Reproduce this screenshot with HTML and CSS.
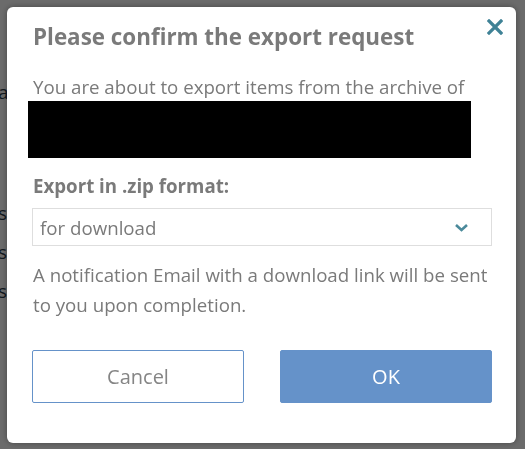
FILE: index.html
```html
<!DOCTYPE html>
<html lang="en">
<head>
  <meta charset="UTF-8">
  <title>Export request</title>
  <link rel="stylesheet" href="styles.css">
</head>
<body>

  <div class="page">
    <p class="line first">a</p>
    <p class="line">s</p>
    <p class="line">s</p>
    <p class="line">s</p>
  </div>

  <div class="overlay">
    <div class="modal">
      <button class="close" aria-label="Close">
        <svg width="16" height="16" viewBox="0 0 16 16">
          <path d="M2 2 L14 14 M14 2 L2 14" stroke="#3f8296" stroke-width="3.2" stroke-linecap="square" fill="none"/>
        </svg>
      </button>
      <h2>Please confirm the export request</h2>
      <p class="intro">You are about to export items from the archive of</p>
      <div class="redacted"></div>
      <label class="field-label">Export in .zip format:</label>
      <div class="select">
        <span>for download</span>
        <svg width="15" height="9" viewBox="0 0 15 9">
          <path d="M2 2 L7.5 7 L13 2" stroke="#4b8a9b" stroke-width="2.6" fill="none"/>
        </svg>
      </div>
      <p class="note">A notification Email with a download link will be sent to you upon completion.</p>
      <div class="actions">
        <button class="btn cancel">Cancel</button>
        <button class="btn ok">OK</button>
      </div>
    </div>
  </div>

</body>
</html>
```

FILE: styles.css
```css
* {
  box-sizing: border-box;
}
body {
  margin: 0;
  font-family: 'Open Sans', sans-serif;
  background: #fff;
  color: #2b3a4a;
  height: 449px;
  overflow: hidden;
}
.page {
  padding-top: 80px;
  margin-left: -2px;
}
.line {
  margin: 0 0 15px;
  font-size: 19px;
  line-height: 24px;
}
.line.first {
  margin-bottom: 97px;
}
.overlay {
  position: fixed;
  inset: 0;
  background: rgba(0, 0, 0, 0.58);
  padding: 7px 9px 6px 7px;
}
.modal {
  position: relative;
  background: #fff;
  border-radius: 6px;
  height: 436px;
  padding: 15px 26px 0 26px;
  box-shadow: 0 0 6px rgba(0, 0, 0, 0.35);
  color: #7a7a7a;
}
.close {
  position: absolute;
  top: 12px;
  right: 13px;
  background: none;
  border: none;
  padding: 0;
  cursor: pointer;
}
h2 {
  margin: 0;
  font-size: 22.4px;
  font-weight: 700;
  line-height: 30px;
}
.intro {
  margin: 23px 0 0;
  font-size: 18.7px;
  line-height: 24px;
}
.redacted {
  background: #000;
  height: 57px;
  width: 443px;
  margin: 2px 0 0 -5px;
}
.field-label {
  display: block;
  margin-top: 16px;
  font-size: 18.7px;
  font-weight: 700;
  line-height: 24px;
}
.select {
  display: flex;
  align-items: center;
  justify-content: space-between;
  margin: 10px 0 0 -1px;
  width: 460px;
  height: 38px;
  border: 1px solid #dedede;
  padding: 0 22px 0 7px;
  font-size: 18.7px;
}
.note {
  margin: 14px 0 0;
  font-size: 18.7px;
  line-height: 30px;
}
.actions {
  display: flex;
  gap: 36px;
  margin: 30px 0 0 -1px;
  width: 460px;
}
.btn {
  flex: 1;
  height: 53px;
  border-radius: 2px;
  border: 1px solid #6592c9;
  font-family: 'Open Sans', sans-serif;
  font-size: 20px;
  cursor: pointer;
}
.cancel {
  background: #fff;
  color: #858585;
}
.ok {
  background: #6592c9;
  color: #fff;
}
```
